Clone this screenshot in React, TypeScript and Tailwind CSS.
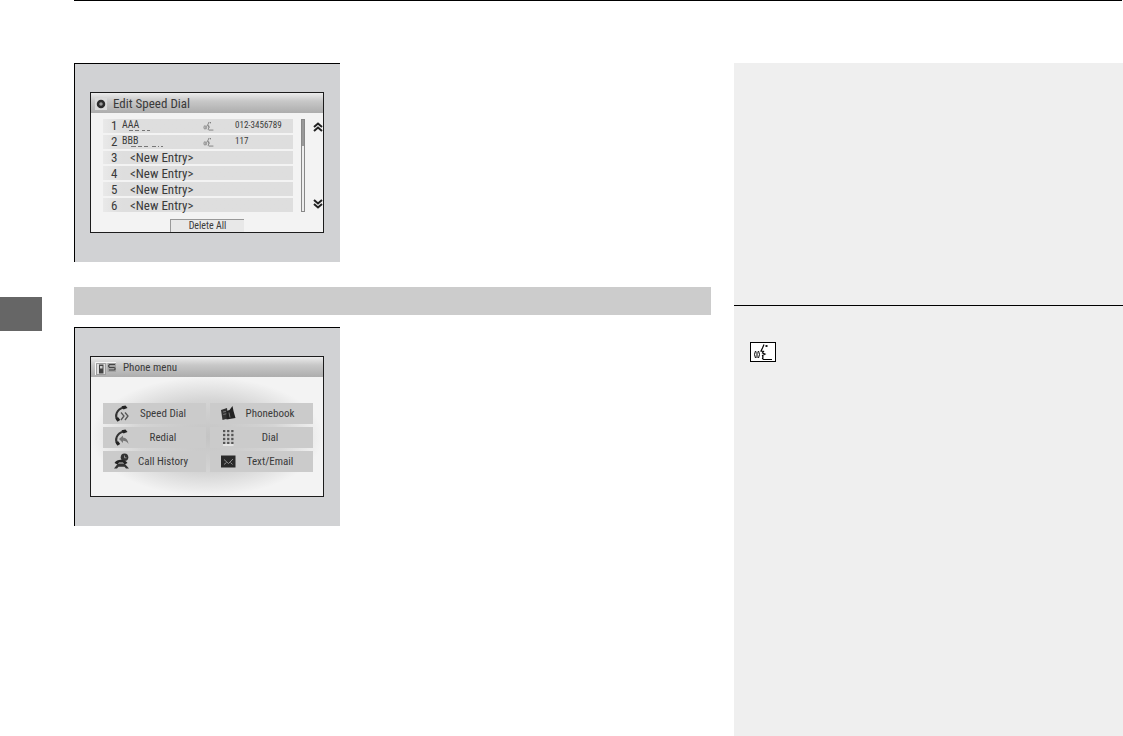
import type { ReactNode } from "react";

type Entry = {
  id: number;
  name?: string;
  phone?: string;
  dashes?: string;
};

type MenuItem = {
  label: string;
  icon: ReactNode;
};

const entries: Entry[] = [
  { id: 1, name: "AAA", phone: "012-3456789", dashes: "M7 .5h4M13 .5h4M20 .5h3M25 .5h3" },
  { id: 2, name: "BBB", phone: "117", dashes: "M9 .5h5M16 .5h4M22 .5h4M30 .5h4M36 .5h1M39 .5h2" },
  { id: 3 },
  { id: 4 },
  { id: 5 },
  { id: 6 },
];

function VoiceIcon({ className }: { className: string }) {
  return (
    <svg viewBox="0 0 24 18" className={className} fill="none" stroke="currentColor" aria-hidden="true">
      <path d="M4.500 8Q2.500 11.500 4.500 15M6 8.500v6.500M7.500 8Q9.500 11.500 7.500 15" />
      <path d="M13 1.500L11.500 5 10 8l2.500.5L11.500 10l2.500 1-2.500 1.500.5 1.500-.5 1.500 1 1H21" strokeWidth="1.200" />
      <path d="M14.500 3h2" strokeWidth="1.800" />
    </svg>
  );
}

function Handset() {
  return (
    <>
      <path d="M4.500 15C1.500 10.500 3.500 4.500 10.500 2.500" fill="none" stroke="#333" strokeWidth="2" />
      <path d="M8.500 1.200l4-.7 2 2.500-4 1.500z" fill="#222" />
      <path d="M2.500 13.500l2.700-1.200 2 2.700-2.700 1.800z" fill="#222" />
    </>
  );
}

const menu: MenuItem[] = [
  {
    label: "Speed Dial",
    icon: (
      <>
        <Handset />
        <path d="M8 7.500l3 3.500-3 4M12 7.500l3 3.500-3 4" fill="none" stroke="#555" strokeWidth="1.300" />
      </>
    ),
  },
  {
    label: "Phonebook",
    icon: (
      <>
        <path d="M1 5l6-2 1 10.500L2.500 15z" fill="#333" />
        <path d="M6.500 6l3-1 3-4 1 5 2 7-9 1.500z" fill="#222" />
        <path d="M3 7l3-.7M3.300 9.500l3-.7M9 7.500l1 5" stroke="#888" strokeWidth=".8" />
      </>
    ),
  },
  {
    label: "Redial",
    icon: (
      <>
        <Handset />
        <path d="M6 10l4-3.500v2c3 .3 5 2.500 5.500 6.500-1.500-2.500-3-3.200-5.500-3.200V14z" fill="#777" />
      </>
    ),
  },
  {
    label: "Dial",
    icon: (
      <>
        <path d="M3 2h10.500M3 6h10.500M3 10h10.500M3 14h10.500" stroke="#555" strokeWidth="1.800" strokeDasharray="2.300 1.800" />
        <path d="M3 4h10.500M3 8h10.500M3 12h10.500" stroke="#999" strokeWidth=".8" strokeDasharray="2.300 1.800" />
        <path d="M3 16h10.500" stroke="#fff" />
      </>
    ),
  },
  {
    label: "Call History",
    icon: (
      <>
        <circle cx="11.500" cy="4.300" r="3.800" fill="#333" />
        <path d="M11.500 2.500v2.300h2" fill="none" stroke="#aaa" strokeWidth=".8" />
        <path d="M1.500 10C4 5.800 11.500 5.800 14.500 10l-3 1.500-1.500-2H6l-1.500 2z" fill="#222" />
        <path d="M4.500 11L1 15.500h3l1.500-1.700h6l1.500 1.700h3L12 11l-2-.6H6z" fill="#333" />
      </>
    ),
  },
  {
    label: "Text/Email",
    icon: (
      <>
        <path d="M1 2.500h14.500v12H1z" fill="#2a2a2a" />
        <path d="M4 6.500l4.500 4 4.500-4.500M4 11.500l2.500-2M10.500 9.500l2 2" fill="none" stroke="#999" strokeWidth=".9" />
      </>
    ),
  },
];

function Figure({ children }: { children: ReactNode }) {
  return (
    <figure className="h-[199px] w-[266px] border-t border-l border-black bg-[#d1d2d4] pt-7 pl-[15px]">
      <div className="flex h-[141px] w-[234px] flex-col border border-[#1c1c1c] bg-[#f3f3f3] text-[#3a3a3a]">
        {children}
      </div>
    </figure>
  );
}

function TitleBar({ title, children }: { title: string; children: ReactNode }) {
  return (
    <header className="flex h-5 shrink-0 items-center gap-[6px] bg-linear-to-b from-[#ececec] via-[#c8c8c8] via-40% to-[#adadad] pt-[2px] pl-1">
      {children}
      {title}
    </header>
  );
}

function Chevrons({ d }: { d: string }) {
  return (
    <svg viewBox="0 0 10 10" className="size-[10px]" fill="none" stroke="#222" strokeWidth="2">
      <path d={d} />
    </svg>
  );
}

function SpeedDialScreen() {
  return (
    <Figure>
      <div className="text-[13px]">
        <TitleBar title="Edit Speed Dial">
          <svg viewBox="0 0 12 12" className="size-3" aria-hidden="true">
            <path d="M0 0h12v12H0z" fill="#dadada" />
            <circle cx="6" cy="6" r="3" fill="#999" stroke="#2a2a2a" strokeWidth="2.500" />
          </svg>
        </TitleBar>
      </div>

      <div className="flex h-[99px] gap-2 pt-[6px] pl-3">
        <ol className="grid flex-1 grid-rows-6 gap-[2px]">
          {entries.map((entry) => (
            <li key={entry.id} className="min-h-0">
              <button className="flex h-full w-full items-center bg-linear-to-r from-[#e9e9e9] via-[#dedede] via-10% to-[#dedede] pl-2 text-left text-[13px] leading-none">
                <span className="w-[11px]">{entry.id}</span>
                {entry.name ? (
                  <>
                    <span className="flex w-[80px] flex-col text-[10px] leading-[10px]">
                      {entry.name}
                      <svg viewBox="0 0 42 1" className="h-px w-[42px]" stroke="#777" aria-hidden="true">
                        <path d={entry.dashes} />
                      </svg>
                    </span>
                    <VoiceIcon className="h-[10px] w-[13px] text-[#555]" />
                    <span className="pl-5 text-[9px]">{entry.phone}</span>
                  </>
                ) : (
                  <span className="pl-2">&lt;New Entry&gt;</span>
                )}
              </button>
            </li>
          ))}
        </ol>
        <div className="w-1 border border-[#888] bg-[#eee]">
          <div className="h-[26px] bg-[#999]" />
        </div>
        <div className="flex flex-col justify-between py-[3px]">
          <button aria-label="Page up">
            <Chevrons d="M1 5l4-3.500 4 3.500M1 9l4-3.500 4 3.500" />
          </button>
          <button aria-label="Page down">
            <Chevrons d="M1 1l4 3.500 4-3.500M1 5l4 3.500 4-3.500" />
          </button>
        </div>
      </div>

      <button className="mx-auto mt-[7px] h-[13px] w-[74px] border-t border-l border-[#999] bg-[#e8e8e8] text-[10px] leading-3">
        Delete All
      </button>
    </Figure>
  );
}

function PhoneMenuScreen() {
  return (
    <Figure>
      <div className="text-[11px]">
        <TitleBar title="Phone menu">
          <svg viewBox="0 0 22 13" className="h-[13px] w-[22px]" fill="none" aria-hidden="true">
            <path d="M.5 13V.5H21" stroke="#f5f5f5" />
            <path d="M1.500 12.500v-11h9v11z" fill="#ddd" stroke="#888" strokeWidth=".7" />
            <path d="M4 2.500h4.500v9H4z" fill="#444" />
            <path d="M5 4h2.500v2.500H5z" fill="#ccc" />
            <path d="M12.500 1h8.500v9h-8.500z" fill="#a2a2a2" />
            <path d="M20 2.500h-5.500l-1 1.500 1 1.500h4.500c1.500 0 1.500 2.500 0 2.500H14" stroke="#444" strokeWidth="1.200" />
          </svg>
        </TitleBar>
      </div>

      <div className="flex-1 bg-radial-[closest-side] from-[#c4c4c4] via-[#d4d4d4] via-60% to-[#f3f3f3] pt-[26px] pr-[10px] pl-3">
        <nav className="grid grid-cols-2 gap-x-1 gap-y-[3px]">
          {menu.map((item) => (
            <button key={item.label} className="flex h-[21px] items-center bg-[#cbcbcb] pl-[10px] text-[11px]">
              <svg viewBox="0 0 17 17" className="size-[17px]" aria-hidden="true">
                {item.icon}
              </svg>
              <span className="w-[66px] pt-[2px] text-center">{item.label}</span>
            </button>
          ))}
        </nav>
      </div>
    </Figure>
  );
}

export default function App() {
  return (
    <div className="flex min-h-screen bg-white font-['Roboto_Condensed','Liberation_Sans_Narrow',Roboto,sans-serif]">
      <div className="w-[42px] shrink-0 pt-[297px]">
        <div className="h-[34px] bg-[#666]" />
      </div>

      <div className="ml-8 flex flex-1 flex-col">
        <div className="mr-px h-[63px] border-t border-black" />
        <div className="flex flex-1 gap-[23px]">
          <main className="flex-1">
            <SpeedDialScreen />
            <div className="mt-[25px] mb-3 h-7 bg-[#ccc]" />
            <PhoneMenuScreen />
          </main>

          <aside className="w-[389px] bg-[#efefef]">
            <div className="h-[243px] border-b border-black" />
            <div className="px-4 pt-9">
              <div className="flex h-5 w-[26px] items-center justify-center border border-black bg-white">
                <VoiceIcon className="h-[18px] w-6" />
              </div>
            </div>
          </aside>
        </div>
      </div>
    </div>
  );
}
